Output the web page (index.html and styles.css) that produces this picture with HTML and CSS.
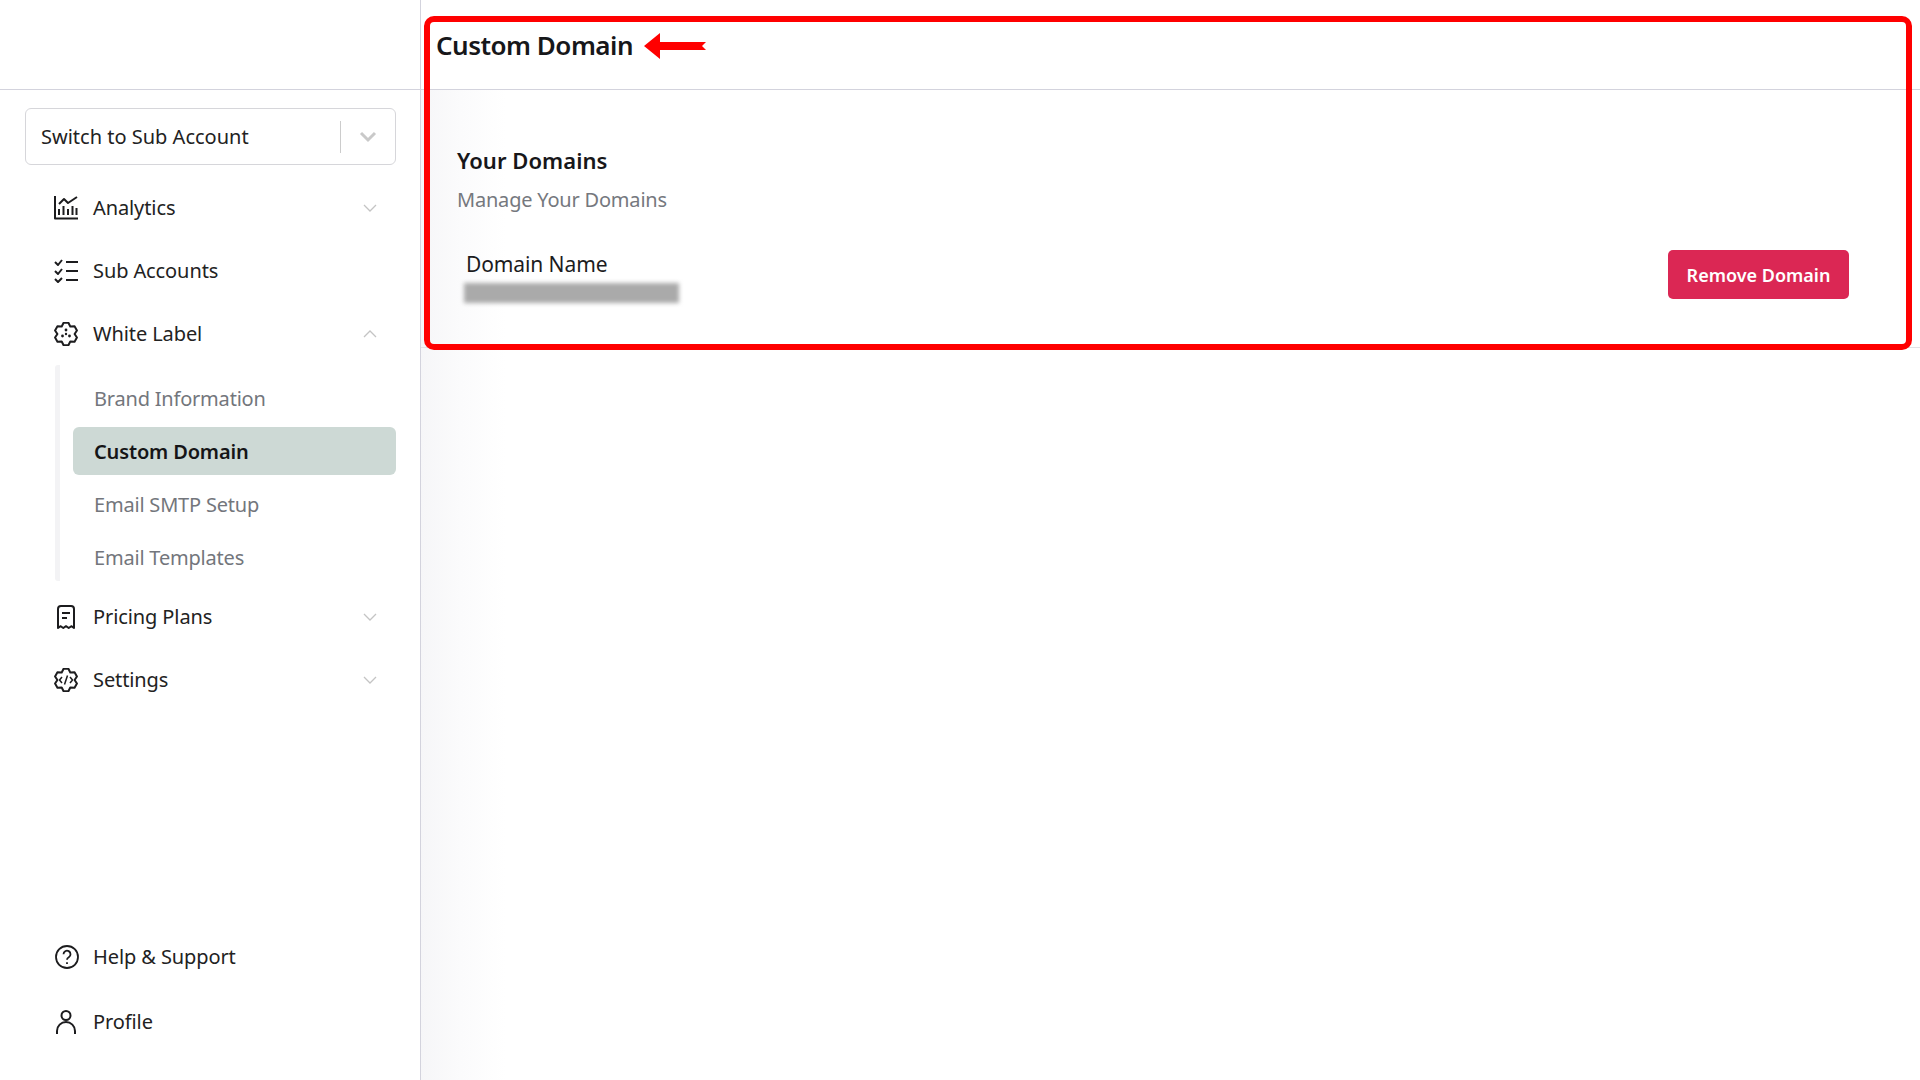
FILE: index.html
```html
<!DOCTYPE html>
<html lang="en">
<head>
<meta charset="utf-8">
<title>Custom Domain</title>
<link rel="stylesheet" href="styles.css">
</head>
<body>
<div class="app">
  <aside class="sidebar">
    <div class="logo-bar"></div>
    <div class="switcher">
      <span class="switcher-label">Switch to Sub Account</span>
      <span class="switcher-sep"></span>
      <svg class="switcher-chev" viewBox="0 0 18 12"><path d="M2 2l7 7 7-7"/></svg>
    </div>
    <nav class="nav">
      <a class="nav-item">
        <svg class="icon" viewBox="0 0 24 24"><path d="M1 0v22.500h23"/><path d="M5 19v-6M9.500 19v-9M14 19v-6M18.500 19v-9M22.500 19v-7"/><path d="M5 8l5-5 4 4 9-6"/></svg>
        <span class="nav-label">Analytics</span>
        <svg class="chev" viewBox="0 0 14 8"><path d="M1 1l6 6 6-6"/></svg>
      </a>
      <a class="nav-item">
        <svg class="icon" viewBox="0 0 24 24"><path d="M1 3l3 3 4-5M1 12l3 3 4-5M1 20l3 3 4-4"/><path d="M12 3h12M12 12h12M12 21h12"/></svg>
        <span class="nav-label">Sub Accounts</span>
      </a>
      <a class="nav-item">
        <svg class="icon" viewBox="0 0 24 24"><path d="M9.600.750h4.800l1.900 3.800 4.250-.250 2.390 4.150L20.600 12l2.340 3.550-2.390 4.150-4.250-.250-1.900 3.800H9.600l-1.900-3.800-4.250.250-2.390-4.150L3.400 12 1.060 8.450 3.450 4.300l4.250.250z"/><circle class="fill" cx="12" cy="8" r="1.400"/><circle class="fill" cx="8.500" cy="14" r="1.400"/><circle class="fill" cx="15.500" cy="14" r="1.400"/><circle class="fill" cx="12" cy="12" r="1.200"/></svg>
        <span class="nav-label">White Label</span>
        <svg class="chev" viewBox="0 0 14 8"><path d="M1 7l6-6 6 6"/></svg>
      </a>
      <div class="subnav">
        <a class="sub-item">Brand Information</a>
        <a class="sub-item sub-item-active">Custom Domain</a>
        <a class="sub-item">Email SMTP Setup</a>
        <a class="sub-item">Email Templates</a>
      </div>
      <a class="nav-item">
        <svg class="icon" viewBox="0 0 24 24"><path d="M4 23V4a3 3 0 0 1 3-3h10a3 3 0 0 1 3 3v19l-2.700-1.800-2.600 1.800-2.700-1.800-2.700 1.800-2.600-1.800z"/><path d="M8 8h8M8 13h5"/></svg>
        <span class="nav-label">Pricing Plans</span>
        <svg class="chev" viewBox="0 0 14 8"><path d="M1 1l6 6 6-6"/></svg>
      </a>
      <a class="nav-item">
        <svg class="icon" viewBox="0 0 24 24"><path d="M9.600.750h4.800l1.900 3.800 4.250-.250 2.390 4.150L20.600 12l2.340 3.550-2.390 4.150-4.250-.250-1.900 3.800H9.600l-1.900-3.800-4.250.250-2.390-4.150L3.400 12 1.060 8.450 3.450 4.300l4.250.250z"/><path class="thin" d="M8 9l-2.500 3L8 15M16 9l2.500 3-2.500 3M13.500 7.500l-3 9"/></svg>
        <span class="nav-label">Settings</span>
        <svg class="chev" viewBox="0 0 14 8"><path d="M1 1l6 6 6-6"/></svg>
      </a>
    </nav>
    <div class="nav nav-bottom">
      <a class="nav-item">
        <svg class="icon icon-help" viewBox="0 0 24 24"><circle cx="12" cy="12" r="11"/><path d="M8.500 9.200a3.500 3.500 0 1 1 5.300 3c-1.200.700-1.800 1.300-1.800 2.600"/><path d="M12 17.200v1.800"/></svg>
        <span class="nav-label">Help &amp; Support</span>
      </a>
      <a class="nav-item">
        <svg class="icon" viewBox="0 0 24 24"><circle cx="12" cy="5.500" r="4.500"/><path d="M3 24v-3a9 9 0 0 1 18 0v3"/></svg>
        <span class="nav-label">Profile</span>
      </a>
    </div>
  </aside>
  <main class="main">
    <header class="topbar">
      <h1 class="title">Custom Domain</h1>
    </header>
    <section class="content">
      <h2 class="section-title">Your Domains</h2>
      <p class="section-sub">Manage Your Domains</p>
      <div class="domain-row">
        <div class="domain-info">
          <div class="domain-label">Domain Name</div>
          <div class="domain-blur"></div>
        </div>
        <button class="danger-btn">Remove Domain</button>
      </div>
    </section>
    <div class="highlight"></div>
    <svg class="arrow" viewBox="0 0 62 26"><path d="M0 13L16 0v9h46l-4 4 4 4H16v9z"/></svg>
  </main>
</div>
</body>
</html>
```
FILE: styles.css
```css
* { box-sizing: border-box; }
html, body { margin: 0; height: 100%; background: #fff; }
body { font-family: "Noto Sans", "Open Sans", sans-serif; color: #1c1c1e; overflow: hidden; }
.app { display: flex; height: 1080px; }

.sidebar { width: 421px; flex: none; border-right: 1px solid #d3d3dd; display: flex; flex-direction: column; }
.logo-bar { height: 90px; border-bottom: 1px solid #d3d3dd; flex: none; }
.switcher { margin: 18px 24px 0 25px; height: 57px; border: 1px solid #d6d6da; border-radius: 6px; display: flex; align-items: center; padding-left: 15px; flex: none; }
.switcher-label { font-size: 20px; flex: 1; color: #222; }
.switcher-sep { width: 1px; height: 32px; background: #ccc; }
.switcher-chev { width: 18px; height: 12px; margin: 0 18px; fill: none; stroke: #c9c9c9; stroke-width: 3; }

.nav { margin: 0; padding: 11px 0 0; display: flex; flex-direction: column; flex: none; }
.nav-bottom { margin-top: auto; padding: 0 0 27px; gap: 2px; }
.nav-item { height: 63px; display: flex; align-items: center; padding: 0 0 0 54px; }
.icon { width: 24px; height: 24px; flex: none; fill: none; stroke: #1c1c1e; stroke-width: 2; stroke-linejoin: round; overflow: hidden; }
.icon-help { stroke-width: 1.800; margin: 0 -1px 0 1px; }
.fill { fill: #1c1c1e; stroke: none; }
.thin { stroke-width: 1.500; }
.nav-label { font-size: 20px; letter-spacing: -.1px; margin-left: 15px; flex: 1; color: #222; }
.chev { width: 14px; height: 8px; margin-right: 43px; fill: none; stroke: #c4c4c4; stroke-width: 1.300; }

.subnav { margin: 0 24px 4px 55px; padding: 9px 0 0 13px; border-left: 5px solid #f3f3f5; border-radius: 3px; display: flex; flex-direction: column; gap: 5px; }
.sub-item { height: 48px; display: flex; align-items: center; padding-left: 21px; border-radius: 6px; font-size: 20px; letter-spacing: -.2px; color: #73767c; }
.sub-item-active { background: #cdd9d5; color: #151517; font-weight: 600; letter-spacing: -.15px; }

.main { flex: 1; position: relative; min-width: 0; background: linear-gradient(90deg, #f6f6f8 0, #fbfbfc 40px, #fff 85px); }
.topbar { height: 90px; background: #fff; border-bottom: 1px solid #d3d3dd; padding: 27px 0 0 15px; }
.title { margin: 0; font-size: 26px; line-height: 36px; font-weight: 600; letter-spacing: -.5px; color: #17171a; }
.content { height: 258px; padding: 54px 71px 0 36px; border-bottom: 1px solid #e2e2e6; }
.section-title { margin: 0; font-size: 22px; line-height: 32px; font-weight: 600; letter-spacing: .05px; color: #17171a; }
.section-sub { margin: 8px 0 0; font-size: 20px; line-height: 32px; letter-spacing: -.2px; color: #75787e; }
.domain-row { display: flex; justify-content: space-between; align-items: flex-start; margin-top: 34px; }
.domain-info { padding-left: 7px; }
.domain-label { font-size: 21px; line-height: 28px; letter-spacing: -.1px; color: #1c1c1e; padding-left: 2px; }
.domain-blur { width: 215px; height: 20px; margin-top: 5px; background: #aaa; filter: blur(2px); }
.danger-btn { width: 181px; height: 49px; border: 0; border-radius: 5px; background: #db2754; color: #fff; font-family: inherit; font-size: 18px; font-weight: 600; padding: 0; }

.highlight { position: absolute; left: 3px; top: 16px; width: 1488px; height: 334px; border: 6px solid #ff0000; border-radius: 10px; }
.arrow { position: absolute; left: 223px; top: 33px; width: 62px; height: 26px; fill: #ff0000; }
```
